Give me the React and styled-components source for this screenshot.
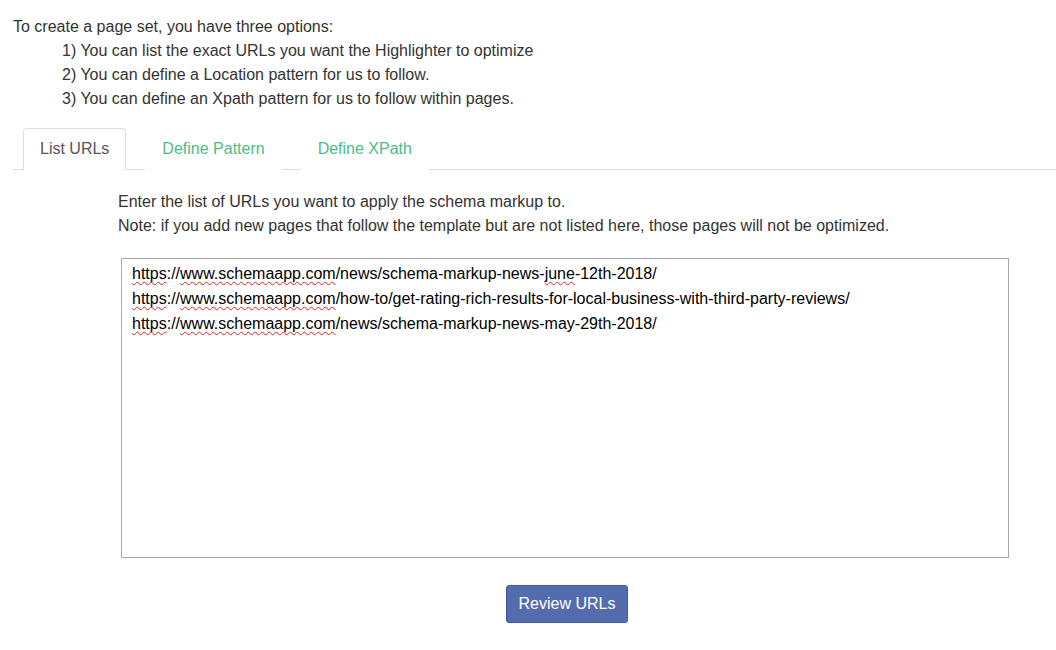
import styled, { createGlobalStyle } from "styled-components";

const GlobalStyle = createGlobalStyle`
  body {
    margin: 0;
    background: #fff;
    font-family: "Liberation Sans", Arial, sans-serif;
    font-size: 16px;
    color: #333;
  }
`;

const urls = [
  ["news/schema-markup-news-", "june", "-12th-2018/"],
  ["how-to/get-rating-rich-results-for-local-business-with-third-party-reviews/"],
  ["news/schema-markup-news-may-29th-2018/"],
];

function App() {
  return (
    <>
      <GlobalStyle />
      <Page>
        <Intro>
          <p>To create a page set, you have three options:</p>
          <Option>1) You can list the exact URLs you want the Highlighter to optimize</Option>
          <Option>2) You can define a Location pattern for us to follow.</Option>
          <Option>3) You can define an Xpath pattern for us to follow within pages.</Option>
        </Intro>

        <Tabs>
          <Tab $active>List URLs</Tab>
          <Tab>Define Pattern</Tab>
          <Tab>Define XPath</Tab>
        </Tabs>

        <Panel>
          <Help>
            <p>Enter the list of URLs you want to apply the schema markup to.</p>
            <p>Note: if you add new pages that follow the template but are not listed here, those pages will not be optimized.</p>
          </Help>

          <UrlBox>
            {urls.map((parts, i) => (
              <UrlLine key={i}>
                <Typo>https</Typo>://<Typo>www.schemaapp.com</Typo>/
                {parts[0]}
                {parts[1] && <Typo>{parts[1]}</Typo>}
                {parts[2]}
              </UrlLine>
            ))}
          </UrlBox>

          <ButtonRow>
            <Button>Review URLs</Button>
          </ButtonRow>
        </Panel>
      </Page>
    </>
  );
}

export default App;

const Page = styled.div`
  padding: 15px 0 0 13px;
`;

const Intro = styled.div`
  line-height: 24px;
  p {
    margin: 0;
  }
`;

const Option = styled.p`
  padding-left: 49px;
`;

const Tabs = styled.ul`
  all: unset;
  list-style: none;
  display: flex;
  gap: 19px;
  margin-top: 17px;
  padding-left: 10px;
  border-bottom: 1px solid #ddd;
`;

const Tab = styled.li`
  height: 40px;
  line-height: 40px;
  padding: 0 16px;
  margin-bottom: -1px;
  border: 1px solid ${(p) => (p.$active ? "#ddd" : "transparent")};
  border-bottom-color: ${(p) => (p.$active ? "#fff" : "transparent")};
  border-radius: 4px 4px 0 0;
  background: #fff;
  color: ${(p) => (p.$active ? "#555" : "#4dbd84")};
  cursor: pointer;
`;

const Panel = styled.div`
  width: 898px;
  margin: 20px 0 0 105px;
`;

const Help = styled.div`
  line-height: 24px;
  p {
    margin: 0;
  }
`;

const UrlBox = styled.div`
  box-sizing: border-box;
  width: 888px;
  height: 300px;
  margin: 20px 0 0 3px;
  padding: 2px 10px;
  border: 1px solid #a9a9a9;
  color: #000;
  line-height: 25px;
`;

const UrlLine = styled.div`
  white-space: nowrap;
`;

const Typo = styled.span`
  text-decoration: underline wavy #e02020;
  text-decoration-thickness: 1px;
  text-underline-offset: 2px;
  text-decoration-skip-ink: none;
`;

const ButtonRow = styled.div`
  display: flex;
  justify-content: center;
  margin-top: 27px;
`;

const Button = styled.button`
  height: 38px;
  padding: 0 12px;
  border: 1px solid #3f5a9a;
  border-radius: 3px;
  background: #536cad;
  color: #fff;
  font-family: "Liberation Sans", Arial, sans-serif;
  font-size: 16px;
  cursor: pointer;
`;
